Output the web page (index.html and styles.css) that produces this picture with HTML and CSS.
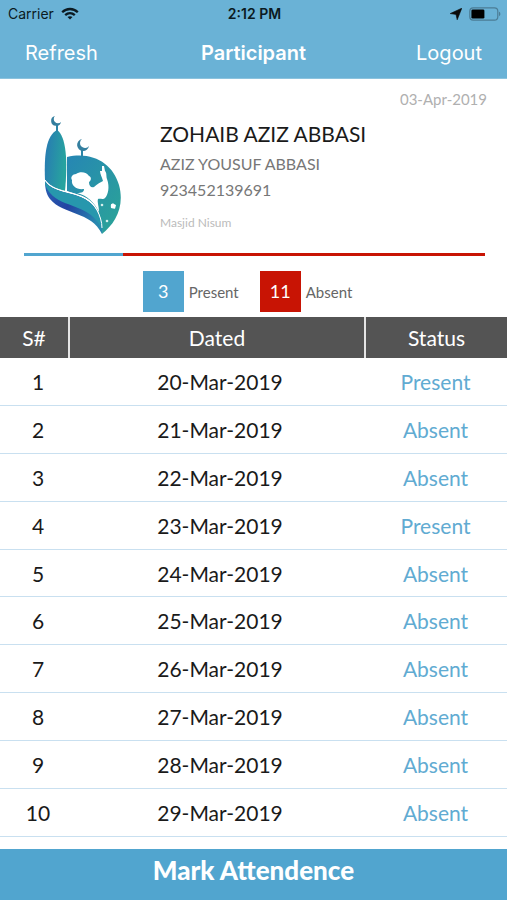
FILE: index.html
```html
<!DOCTYPE html>
<html lang="en">
<head>
  <meta charset="UTF-8" />
  <meta name="viewport" content="width=device-width, initial-scale=1.0"/>
  <title>Participant</title>
  <link rel="stylesheet" href="styles.css">
</head>
<body>

  <header class="top">
    <div class="status-bar">
      <div class="carrier">
        <span>Carrier</span>
        <svg width="18" height="13" viewBox="0 0 18 13" fill="none" stroke="#0b1a22" stroke-width="2.3">
          <path d="M1.2 5.2C5.6 0.9 12.4 0.9 16.8 5.2" />
          <path d="M4.2 8.2C7 5.6 11 5.6 13.8 8.2" />
          <path d="M9 12.6L6.5 10.1C7.9 8.9 10.1 8.9 11.5 10.1Z" fill="#0b1a22" stroke="none" />
        </svg>
      </div>
      <span class="time">2:12 PM</span>
      <div class="indicators">
        <svg width="12" height="12" viewBox="0 0 12 12">
          <path d="M11.8 0.2L7.2 11.8L6 6.4L0.2 5.6Z" fill="#0b0b0b" stroke="#0b0b0b" stroke-width="0.6" />
        </svg>
        <svg width="32" height="14" viewBox="0 0 32 14">
          <rect x="0.8" y="0.8" width="28" height="12.4" rx="3.4" fill="none" stroke="#4b7c95" stroke-width="1.2" />
          <rect x="2.4" y="2.4" width="13" height="9.2" rx="1.4" fill="#000" />
          <path d="M30 4.8C31.8 5.4 31.8 8.6 30 9.2Z" fill="#4b7c95" />
        </svg>
      </div>
    </div>
    <nav class="nav">
      <button class="nav-btn">Refresh</button>
      <h1>Participant</h1>
      <button class="nav-btn nav-right">Logout</button>
    </nav>
  </header>

  <section class="profile">
    <svg class="logo" width="80" height="122" viewBox="0 0 80 122">
      <defs>
        <linearGradient id="tower" x1="0" y1="0" x2="1" y2="0.3">
          <stop offset="0" stop-color="#2878b4" />
          <stop offset="1" stop-color="#27a39f" />
        </linearGradient>
        <linearGradient id="dome" x1="0" y1="0" x2="1" y2="1">
          <stop offset="0" stop-color="#2686b4" />
          <stop offset="1" stop-color="#2ba596" />
        </linearGradient>
        <linearGradient id="wave" x1="0" y1="0" x2="1" y2="0.6">
          <stop offset="0" stop-color="#2b62b4" />
          <stop offset="0.5" stop-color="#2343a2" />
          <stop offset="1" stop-color="#2888b0" />
        </linearGradient>
      </defs>
      <path d="M2 65C1 40 3 21 14 15C23 21 25 45 22 76C13 74 7 71 2 65Z" fill="url(#tower)" />
      <path d="M24 42C50 36 70 49 76 70C82 92 72 109 59 119C60 100 52 84 36 80L24 76Z" fill="url(#dome)" />
      <!-- child with a raised hand -->
      <path d="M34 78C39 78 41 77 41 74C34 75 28 71 29 65C27 62 30 59 33 59C37 56 44 57 46 61C49 62 48 66 46 67C46 71 48 73 51 72C54 69 58 67 60 66C59 62 57 59 57 56L59 56L59 51L61 51L62 56C64 58 63 61 64 64C67 72 65 80 62 83C60 85 57 83 55 84C54 87 56 91 56 97C51 87 45 81 34 78Z" fill="#fff" />
      <path d="M2 66C12 82 42 74 54 96C59 104 60 112 59 119C48 96 20 100 7 84C3 79 2 72 2 66Z" fill="url(#wave)" />
      <path d="M2 66C12 82 42 74 54 96C58 103 60 110 59 115C48 88 20 94 7 78C3 73 2 70 2 66Z" fill="#2797ad" />
      <path d="M2 65C12 81 42 73 54 95C57 101 59 107 59 113" fill="none" stroke="#fff" stroke-width="1" />
      <path d="M14 10V17M39 34V42" stroke="#2b86a8" stroke-width="2" />
      <path d="M12 1A5 5 0 1 0 18 7A4 4 0 1 1 12 1Z" fill="#347f9f" />
      <path d="M39 24A6 6 0 1 0 46 31A5 5 0 1 1 39 24Z" fill="#347f9f" />
      <path d="M70 88.200L71.500 89.200L73 90L72.500 92L72 93.800L70 93.600L68 93L67.800 91L68 89.200Z" fill="#fff" />
      <circle cx="59" cy="90" r="1.300" fill="#d5efec" />
      <circle cx="64" cy="106" r="1.300" fill="#d5efec" />
    </svg>
    <div class="details">
      <time class="today">03-Apr-2019</time>
      <h2>ZOHAIB AZIZ ABBASI</h2>
      <p>AZIZ YOUSUF ABBASI</p>
      <p>923452139691</p>
      <p class="place">Masjid Nisum</p>
    </div>
  </section>

  <section class="summary">
    <div class="ratio"><div class="ratio-present"></div><div class="ratio-absent"></div></div>
    <div class="counts">
      <div class="count"><span class="box">3</span><span>Present</span></div>
      <div class="count"><span class="box box-absent">11</span><span>Absent</span></div>
    </div>
  </section>

  <main class="records">
    <table>
      <thead>
        <tr><th class="col-no">S#</th><th>Dated</th><th class="col-status">Status</th></tr>
      </thead>
      <tbody>
        <tr><td>1</td><td>20-Mar-2019</td><td>Present</td></tr>
        <tr><td>2</td><td>21-Mar-2019</td><td>Absent</td></tr>
        <tr><td>3</td><td>22-Mar-2019</td><td>Absent</td></tr>
        <tr><td>4</td><td>23-Mar-2019</td><td>Present</td></tr>
        <tr><td>5</td><td>24-Mar-2019</td><td>Absent</td></tr>
        <tr><td>6</td><td>25-Mar-2019</td><td>Absent</td></tr>
        <tr><td>7</td><td>26-Mar-2019</td><td>Absent</td></tr>
        <tr><td>8</td><td>27-Mar-2019</td><td>Absent</td></tr>
        <tr><td>9</td><td>28-Mar-2019</td><td>Absent</td></tr>
        <tr><td>10</td><td>29-Mar-2019</td><td>Absent</td></tr>
      </tbody>
    </table>
  </main>

  <button class="mark-btn">Mark Attendence</button>

</body>
</html>
```

FILE: styles.css
```css
* {
  box-sizing: border-box;
}

body {
  margin: 0;
  height: 100vh;
  display: flex;
  flex-direction: column;
  font-family: Lato, sans-serif;
  background: #fff;
  color: #1a1a1a;
}

h1, h2, p {
  margin: 0;
}

button {
  border: none;
  cursor: pointer;
}

/* top bar */
.top {
  background: #6ab2d6;
  color: white;
  font-family: Inter, sans-serif;
  border-bottom: 1px solid #8cc3de;
}

.status-bar {
  display: grid;
  grid-template-columns: 1fr auto 1fr;
  align-items: center;
  height: 27px;
  padding: 0 6px 0 8px;
  font-size: 14px;
  color: #0b1a22;
}

.carrier, .indicators {
  display: flex;
  align-items: center;
  gap: 7px;
}

.indicators {
  justify-content: flex-end;
}

.time {
  font-weight: 600;
}

.nav {
  display: grid;
  grid-template-columns: 1fr auto 1fr;
  align-items: center;
  height: 51px;
  padding: 0 25px;
}

.nav h1 {
  font-size: 20px;
  font-weight: 600;
}

.nav-btn {
  padding: 0;
  background: none;
  color: white;
  font-family: inherit;
  font-size: 20px;
  text-align: left;
}

.nav-right {
  text-align: right;
}

/* participant card */
.profile {
  display: flex;
  gap: 37px;
  padding: 11px 20px 0 43px;
}

.logo {
  flex: none;
  margin-top: 25px;
}

.details {
  flex: 1;
  display: flex;
  flex-direction: column;
}

.today {
  align-self: flex-end;
  font-size: 15px;
  line-height: 18px;
  color: #b0b0b0;
}

.details h2 {
  margin-top: 13px;
  font-size: 21px;
  font-weight: 400;
  line-height: 26px;
}

.details p {
  margin-top: 4px;
  font-size: 16px;
  line-height: 22px;
  color: #777;
}

.details h2 + p {
  margin-top: 6px;
}

.details .place {
  margin-top: 11px;
  font-size: 12px;
  color: #bbb;
}

/* present / absent */
.summary {
  padding: 16px 22px 5px 24px;
}

.ratio {
  display: flex;
  height: 3px;
}

.ratio-present {
  flex: 3;
  background: #51a5cf;
}

.ratio-absent {
  flex: 11;
  background: #c81404;
}

.counts {
  display: flex;
  justify-content: center;
  gap: 21px;
  margin-top: 15px;
  padding-right: 14px;
}

.count {
  display: flex;
  align-items: center;
  gap: 5px;
  font-size: 15px;
  color: #666;
}

.box {
  width: 41px;
  line-height: 41px;
  text-align: center;
  font-size: 18px;
  color: white;
  background: #51a5cf;
}

.box-absent {
  background: #c81404;
}

/* attendance table */
.records {
  flex: 1;
  min-height: 0;
  overflow: auto;
  padding-bottom: 12px;
}

table {
  width: 100%;
  height: 100%;
  border-spacing: 0;
  table-layout: fixed;
  font-size: 21px;
  text-align: center;
}

th {
  height: 41px;
  padding: 0;
  background: #545454;
  color: white;
  font-weight: 400;
  border-left: 2px solid #e5e5e5;
}

th:first-child {
  border-left: none;
}

.col-no {
  width: 68px;
}

.col-status {
  width: 143px;
}

td {
  padding: 0;
  border-bottom: 1px solid #c9e0f0;
}

td:first-child, td:nth-child(2) {
  padding-left: 8px;
}

td:last-child {
  color: #61abd2;
}

.mark-btn {
  flex: none;
  height: 51px;
  padding: 0 0 10px;
  background: #51a5cf;
  color: white;
  font-family: inherit;
  font-size: 26px;
  font-weight: 900;
}
```
